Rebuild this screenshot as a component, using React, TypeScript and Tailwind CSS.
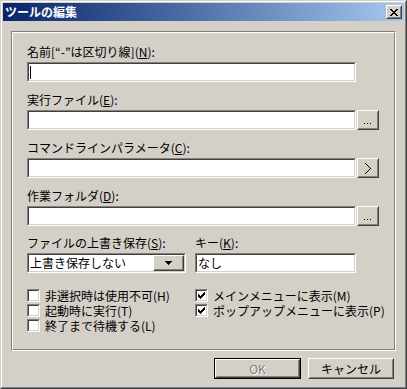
import React from "react";

const font = { fontFamily: '"Noto Sans CJK JP", "Noto Sans", sans-serif' };

function Sunken({ className = "", children }: { className?: string; children?: React.ReactNode }) {
  return (
    <div className={`border border-t-[#808080] border-l-[#808080] border-b-white border-r-white ${className}`}>
      <div className="h-full border border-t-[#404040] border-l-[#404040] border-b-[#D4D0C8] border-r-[#D4D0C8] bg-white flex items-center overflow-hidden">
        {children}
      </div>
    </div>
  );
}

function Raised({ className = "", children }: { className?: string; children?: React.ReactNode }) {
  return (
    <div className={`shrink-0 border border-t-white border-l-white border-b-[#404040] border-r-[#404040] bg-[#D4D0C8] ${className}`}>
      <div className="h-full border border-t-[#D4D0C8] border-l-[#D4D0C8] border-b-[#808080] border-r-[#808080] flex items-center justify-center">
        {children}
      </div>
    </div>
  );
}

function Label({ text, key_, after = "):" }: { text: string; key_: string; after?: string }) {
  return (
    <div className="h-[14px] leading-[14px] text-[12px] text-black whitespace-nowrap">
      {text}(<span className="underline">{key_}</span>{after}
    </div>
  );
}

function Dots() {
  return (
    <svg width="8" height="2" className="mt-[8px]">
      <rect x="0" y="0" width="1" height="1" fill="#000" />
      <rect x="3" y="0" width="1" height="1" fill="#000" />
      <rect x="6" y="0" width="1" height="1" fill="#000" />
    </svg>
  );
}

function Chevron() {
  return (
    <svg width="6" height="11" shapeRendering="crispEdges">
      {[0, 1, 2, 3, 4, 5, 4, 3, 2, 1, 0].map((x, y) => (
        <rect key={y} x={x} y={y} width="1" height="1" fill="#000" />
      ))}
    </svg>
  );
}

const checkPix = [
  "......x",
  ".....xx",
  "x...xxx",
  "xx.xxx.",
  "xxxxx..",
  ".xxx...",
  "..x....",
];

function CheckBox({ checked, label }: { checked: boolean; label: string }) {
  return (
    <div className="h-[15px] flex items-center">
      <div className="shrink-0 w-[13px] h-[13px] border border-t-[#808080] border-l-[#808080] border-b-white border-r-white">
        <div className="w-full h-full border border-t-[#404040] border-l-[#404040] border-b-[#D4D0C8] border-r-[#D4D0C8] bg-white relative">
          {checked && (
            <svg width="7" height="7" className="absolute left-[1px] top-[1px]" shapeRendering="crispEdges">
              {checkPix.flatMap((row, y) =>
                row.split("").map((c, x) =>
                  c === "x" ? <rect key={`${x}-${y}`} x={x} y={y} width="1" height="1" fill="#000" /> : null
                )
              )}
            </svg>
          )}
        </div>
      </div>
      <div className="ml-[5px] h-[15px] text-[12px] leading-[15px] text-black whitespace-nowrap">{label}</div>
    </div>
  );
}

const xPix = [
  "xx....xx",
  ".xx..xx.",
  "..xxxx..",
  "...xx...",
  "..xxxx..",
  ".xx..xx.",
  "xx....xx",
];

export default function App() {
  return (
    <div style={font} className="w-[407px] h-[389px] bg-[#D4D0C8] border border-t-[#D4D0C8] border-l-[#D4D0C8] border-b-[#404040] border-r-[#404040]">
      <div className="w-full h-full border border-t-white border-l-white border-b-[#808080] border-r-[#808080] p-[1px] flex flex-col">
        {/* Title bar */}
        <div className="h-[18px] flex items-center bg-gradient-to-r from-[#0A246A] to-[#A6CAF0] pl-[2px] pr-[2px]">
          <span className="text-white font-bold text-[12px] leading-[14px] flex-1">ツールの編集</span>
          <Raised className="w-[16px] h-[14px]">
            <svg width="8" height="7" shapeRendering="crispEdges">
              {xPix.flatMap((row, y) =>
                row.split("").map((c, x) =>
                  c === "x" ? <rect key={`${x}-${y}`} x={x} y={y} width="1" height="1" fill="#000" /> : null
                )
              )}
            </svg>
          </Raised>
        </div>

        {/* Group box */}
        <div className="mt-[10px] mx-[8px] h-[320px] border border-t-[#808080] border-l-[#808080] border-b-white border-r-white">
          <div className="h-full border border-t-white border-l-white border-b-[#808080] border-r-[#808080] pl-[14px] pr-[15px] pt-[12px]">
            <Label text={"名前[“-”は区切り線]"} key_="N" />
            <div className="mt-[3px] flex">
              <Sunken className="w-[329px] h-[20px]">
                <div className="ml-[1px] w-[1px] h-[13px] bg-black" />
              </Sunken>
            </div>

            <div className="mt-[11px]">
              <Label text="実行ファイル" key_="E" />
            </div>
            <div className="mt-[3px] flex gap-[1px]">
              <Sunken className="w-[329px] h-[20px]" />
              <Raised className="w-[22px] h-[20px]">
                <Dots />
              </Raised>
            </div>

            <div className="mt-[11px]">
              <Label text="コマンドラインパラメータ" key_="C" />
            </div>
            <div className="mt-[3px] flex gap-[1px]">
              <Sunken className="w-[329px] h-[20px]" />
              <Raised className="w-[22px] h-[20px]">
                <Chevron />
              </Raised>
            </div>

            <div className="mt-[11px]">
              <Label text="作業フォルダ" key_="D" />
            </div>
            <div className="mt-[3px] flex gap-[1px]">
              <Sunken className="w-[329px] h-[20px]" />
              <Raised className="w-[22px] h-[20px]">
                <Dots />
              </Raised>
            </div>

            <div className="mt-[10px] flex gap-[9px]">
              <div className="w-[159px]">
                <Label text="ファイルの上書き保存" key_="S" />
                <Sunken className="mt-[3px] w-[159px] h-[20px]">
                  <span className="flex-1 pl-[1px] text-[12px] leading-[14px] text-black whitespace-nowrap">上書き保存しない</span>
                  <Raised className="w-[31px] h-[16px]">
                    <svg width="7" height="4" shapeRendering="crispEdges">
                      <rect x="0" y="0" width="7" height="1" fill="#000" />
                      <rect x="1" y="1" width="5" height="1" fill="#000" />
                      <rect x="2" y="2" width="3" height="1" fill="#000" />
                      <rect x="3" y="3" width="1" height="1" fill="#000" />
                    </svg>
                  </Raised>
                </Sunken>
              </div>
              <div className="w-[161px]">
                <Label text="キー" key_="K" />
                <Sunken className="mt-[3px] w-[161px] h-[20px]">
                  <span className="pl-[1px] text-[12px] leading-[14px] text-black">なし</span>
                </Sunken>
              </div>
            </div>

            <div className="mt-[15px] flex gap-[9px]">
              <div className="w-[159px] shrink-0 flex flex-col">
                <CheckBox checked={false} label="非選択時は使用不可(H)" />
                <CheckBox checked={false} label="起動時に実行(T)" />
                <CheckBox checked={false} label="終了まで待機する(L)" />
              </div>
              <div className="w-[161px] shrink-0 flex flex-col">
                <CheckBox checked={true} label="メインメニューに表示(M)" />
                <CheckBox checked={true} label="ポップアップメニューに表示(P)" />
              </div>
            </div>
          </div>
        </div>

        {/* Buttons */}
        <div className="mt-[7px] flex justify-end gap-[7px] pr-[10px]">
          <div className="border border-black">
            <Raised className="w-[85px] h-[19px]">
              <span className="text-[12px] leading-[14px] text-[#808080] [text-shadow:1px_1px_0_#fff]">OK</span>
            </Raised>
          </div>
          <Raised className="w-[86px] h-[21px]">
            <span className="text-[12px] leading-[14px] text-black">キャンセル</span>
          </Raised>
        </div>
      </div>
    </div>
  );
}
